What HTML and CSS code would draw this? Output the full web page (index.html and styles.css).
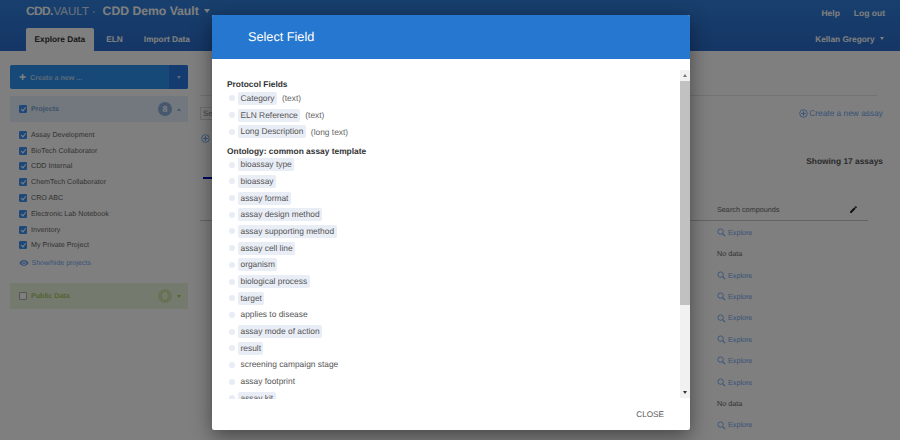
FILE: index.html
```html
<!DOCTYPE html>
<html lang="en">
<head>
  <meta charset="UTF-8">
  <title>CDD Vault - Select Field</title>
  <link rel="stylesheet" href="styles.css">
</head>
<body>
  <header class="topbar">
    <div class="topbar-row">
      <div class="brand">
        <span class="logo-cdd">CDD.</span><span class="logo-vault">VAULT</span><span class="logo-dot">·</span>
        <span class="vault-name">CDD Demo Vault</span>
        <span class="caret caret-big"></span>
      </div>
      <nav class="top-links">
        <a>Help</a>
        <a>Log out</a>
      </nav>
    </div>
    <div class="topbar-row tabs-row">
      <div class="tabs">
        <a class="tab active">Explore Data</a>
        <a class="tab">ELN</a>
        <a class="tab">Import Data</a>
      </div>
      <div class="user-menu">Kellan Gregory <span class="caret"></span></div>
    </div>
  </header>

  <div class="page">
    <aside class="sidebar">
      <div class="create-btn">
        <span class="create-label"><span class="plus">+</span>Create a new ...</span>
        <span class="create-drop"><span class="caret"></span></span>
      </div>

      <div class="panel-head">
        <span class="check on"></span>
        <span class="panel-title">Projects</span>
        <span class="count">8</span>
        <span class="caret caret-up"></span>
      </div>
      <ul class="projects">
        <li><span class="check on"></span>Assay Development</li>
        <li><span class="check on"></span>BioTech Collaborator</li>
        <li><span class="check on"></span>CDD Internal</li>
        <li><span class="check on"></span>ChemTech Collaborator</li>
        <li><span class="check on"></span>CRO ABC</li>
        <li><span class="check on"></span>Electronic Lab Notebook</li>
        <li><span class="check on"></span>Inventory</li>
        <li><span class="check on"></span>My Private Project</li>
      </ul>
      <a class="show-hide">
        <svg width="10" height="10" viewBox="0 0 24 24"><path fill="#70a8f0" d="M12 5C7 5 2.700 8.100 1 12c1.700 3.900 6 7 11 7s9.300-3.100 11-7c-1.700-3.900-6-7-11-7zm0 11.500a4.500 4.500 0 1 1 0-9 4.500 4.500 0 0 1 0 9zm0-7a2.500 2.500 0 1 0 0 5 2.500 2.500 0 0 0 0-5z"/></svg>
        Show/hide projects
      </a>

      <div class="panel-head public">
        <span class="check"></span>
        <span class="panel-title">Public Data</span>
        <span class="count">0</span>
        <span class="caret"></span>
      </div>
    </aside>

    <main class="main">
      <div class="main-rule"></div>
      <div class="toolbar">
        <div class="search-stub">Se</div>
        <a class="create-assay">
          <svg width="9" height="9" viewBox="0 0 20 20"><circle cx="10" cy="10" r="8.500" fill="none" stroke="#70a8f0" stroke-width="2"/><path d="M10 5v10M5 10h10" stroke="#70a8f0" stroke-width="2.500"/></svg>
          Create a new assay
        </a>
      </div>
      <div class="add-row">
        <svg width="9" height="9" viewBox="0 0 20 20"><circle cx="10" cy="10" r="8.500" fill="none" stroke="#70a8f0" stroke-width="2"/><path d="M10 5v10M5 10h10" stroke="#70a8f0" stroke-width="2.500"/></svg>
      </div>
      <div class="showing">Showing 17 assays</div>
      <div class="tab-mark"></div>
      <div class="assay-table">
        <div class="table-head">
          <span>Search compounds</span>
          <svg class="pencil" width="9" height="9" viewBox="0 0 24 24"><path fill="#222" d="M3 17.250V21h3.750L17.800 9.940l-3.750-3.750L3 17.250zM20.700 7.040a1 1 0 0 0 0-1.410l-2.340-2.340a1 1 0 0 0-1.410 0l-1.830 1.830 3.750 3.750 1.830-1.830z"/></svg>
        </div>
        <div class="table-row"><a class="explore"><svg width="9" height="9" viewBox="0 0 20 20"><circle cx="8" cy="8" r="6" fill="none" stroke="#70a8f0" stroke-width="2"/><path d="M12.500 12.500L18 18" stroke="#70a8f0" stroke-width="2.500"/></svg> Explore</a></div>
        <div class="table-row">No data</div>
        <div class="table-row"><a class="explore"><svg width="9" height="9" viewBox="0 0 20 20"><circle cx="8" cy="8" r="6" fill="none" stroke="#70a8f0" stroke-width="2"/><path d="M12.500 12.500L18 18" stroke="#70a8f0" stroke-width="2.500"/></svg> Explore</a></div>
        <div class="table-row"><a class="explore"><svg width="9" height="9" viewBox="0 0 20 20"><circle cx="8" cy="8" r="6" fill="none" stroke="#70a8f0" stroke-width="2"/><path d="M12.500 12.500L18 18" stroke="#70a8f0" stroke-width="2.500"/></svg> Explore</a></div>
        <div class="table-row"><a class="explore"><svg width="9" height="9" viewBox="0 0 20 20"><circle cx="8" cy="8" r="6" fill="none" stroke="#70a8f0" stroke-width="2"/><path d="M12.500 12.500L18 18" stroke="#70a8f0" stroke-width="2.500"/></svg> Explore</a></div>
        <div class="table-row"><a class="explore"><svg width="9" height="9" viewBox="0 0 20 20"><circle cx="8" cy="8" r="6" fill="none" stroke="#70a8f0" stroke-width="2"/><path d="M12.500 12.500L18 18" stroke="#70a8f0" stroke-width="2.500"/></svg> Explore</a></div>
        <div class="table-row"><a class="explore"><svg width="9" height="9" viewBox="0 0 20 20"><circle cx="8" cy="8" r="6" fill="none" stroke="#70a8f0" stroke-width="2"/><path d="M12.500 12.500L18 18" stroke="#70a8f0" stroke-width="2.500"/></svg> Explore</a></div>
        <div class="table-row"><a class="explore"><svg width="9" height="9" viewBox="0 0 20 20"><circle cx="8" cy="8" r="6" fill="none" stroke="#70a8f0" stroke-width="2"/><path d="M12.500 12.500L18 18" stroke="#70a8f0" stroke-width="2.500"/></svg> Explore</a></div>
        <div class="table-row">No data</div>
        <div class="table-row"><a class="explore"><svg width="9" height="9" viewBox="0 0 20 20"><circle cx="8" cy="8" r="6" fill="none" stroke="#70a8f0" stroke-width="2"/><path d="M12.500 12.500L18 18" stroke="#70a8f0" stroke-width="2.500"/></svg> Explore</a></div>
      </div>
    </main>
  </div>

  <div class="overlay"></div>

  <div class="modal">
    <div class="modal-head">Select Field</div>
    <div class="modal-body">
      <div class="field-list">
        <h4>Protocol Fields</h4>
        <div class="field"><span class="chip">Category</span><span class="kind">(text)</span></div>
        <div class="field"><span class="chip">ELN Reference</span><span class="kind">(text)</span></div>
        <div class="field"><span class="chip">Long Description</span><span class="kind">(long text)</span></div>
        <h4 class="second">Ontology: common assay template</h4>
        <div class="field"><span class="chip">bioassay type</span></div>
        <div class="field"><span class="chip">bioassay</span></div>
        <div class="field"><span class="chip">assay format</span></div>
        <div class="field"><span class="chip">assay design method</span></div>
        <div class="field"><span class="chip">assay supporting method</span></div>
        <div class="field"><span class="chip">assay cell line</span></div>
        <div class="field"><span class="chip">organism</span></div>
        <div class="field"><span class="chip">biological process</span></div>
        <div class="field"><span class="chip">target</span></div>
        <div class="field"><span class="chip plain">applies to disease</span></div>
        <div class="field"><span class="chip">assay mode of action</span></div>
        <div class="field"><span class="chip">result</span></div>
        <div class="field"><span class="chip plain">screening campaign stage</span></div>
        <div class="field"><span class="chip plain">assay footprint</span></div>
        <div class="field"><span class="chip">assay kit</span></div>
      </div>
      <div class="scrollbar">
        <span class="arrow arrow-up"></span>
        <div class="scroll-track"><div class="scroll-thumb"></div></div>
        <span class="arrow arrow-down"></span>
      </div>
    </div>
    <div class="modal-foot"><a class="close-btn">CLOSE</a></div>
  </div>
</body>
</html>
```

FILE: styles.css
```css
* {
  box-sizing: border-box;
  margin: 0;
  padding: 0;
}

html, body {
  height: 440px;
  overflow: hidden;
}

body {
  font-family: "Liberation Sans", Arial, sans-serif;
  font-size: 9px;
  color: #333;
  background: #fff;
  text-rendering: geometricPrecision;
}

.caret {
  display: inline-block;
  width: 0;
  height: 0;
  border-left: 2.500px solid transparent;
  border-right: 2.500px solid transparent;
  border-top: 3px solid currentColor;
}

.caret-big {
  border-left-width: 3.500px;
  border-right-width: 3.500px;
  border-top-width: 4px;
  margin-left: 3px;
  vertical-align: 2px;
}

.caret-up {
  border-top: 0;
  border-bottom: 3px solid currentColor;
}

/* top bar */
.topbar {
  height: 51px;
  background: linear-gradient(to bottom, #3080dc, #2a6ccc);
  color: #fff;
}

.topbar-row {
  display: flex;
  justify-content: space-between;
  align-items: center;
  height: 28px;
  padding: 0 15px 0 26px;
}

.brand {
  color: #fff;
  white-space: nowrap;
  margin-bottom: 6px;
}

.logo-cdd {
  font-size: 12px;
  font-weight: 700;
  letter-spacing: -0.700px;
}

.logo-vault {
  font-size: 11.500px;
  margin-left: 1px;
  opacity: 0.8;
}

.logo-dot {
  font-size: 11px;
  margin: 0 4.500px 0 3px;
}

.vault-name {
  font-size: 12.200px;
  font-weight: 700;
}

.top-links {
  display: flex;
  gap: 14px;
  font-size: 8.500px;
  font-weight: 700;
  margin-bottom: 2px;
}

.tabs-row {
  height: 23px;
  align-items: flex-end;
}

.tabs {
  display: flex;
  font-size: 8.300px;
  font-weight: 700;
}

.tab {
  height: 23px;
  line-height: 22px;
  padding: 0 8.500px;
  margin-right: 4px;
}

.tab.active {
  background: #fff;
  color: #333;
  border-radius: 2px 2px 0 0;
}

.user-menu {
  font-size: 8.300px;
  font-weight: 700;
  line-height: 23px;
  margin-right: 1px;
}

.user-menu .caret {
  margin-left: 3px;
  vertical-align: 2px;
}

/* page under the dialog */
.page {
  display: flex;
  gap: 12px;
  padding: 14px 17px 0 10px;
}

.sidebar {
  width: 178px;
  flex-shrink: 0;
}

.create-btn {
  display: flex;
  height: 24px;
  border-radius: 2px;
  background: #2d90f0;
  color: #b8d4f0;
  font-weight: 700;
  margin-bottom: 7px;
  overflow: hidden;
}

.create-label {
  flex: 1;
  display: flex;
  align-items: center;
  padding-left: 9px;
  font-size: 7.200px;
}

.plus {
  font-size: 12px;
  margin-right: 4px;
  color: #fff;
}

.create-drop {
  width: 19px;
  display: flex;
  align-items: center;
  justify-content: center;
  background: #2878e0;
}

.check {
  display: inline-block;
  width: 8px;
  height: 8px;
  flex-shrink: 0;
  border: 1px solid #aaa;
  border-radius: 1px;
  background: #fff;
}

.check.on {
  border-color: #3c90f5;
  background: #3c90f5;
  position: relative;
}

.check.on::after {
  content: "";
  position: absolute;
  left: 1.500px;
  top: 0;
  width: 2px;
  height: 4px;
  border: solid #fff;
  border-width: 0 1px 1px 0;
  transform: rotate(40deg);
}

.panel-head {
  display: flex;
  align-items: center;
  height: 26px;
  padding: 0 7px 0 9px;
  background: #e4f0fa;
  color: #7aa4d4;
  font-size: 7.100px;
  font-weight: 700;
}

.panel-title {
  flex: 1;
  margin-left: 4px;
}

.count {
  width: 14px;
  height: 14px;
  line-height: 14px;
  border-radius: 50%;
  text-align: center;
  font-size: 9px;
  background: #8fb0dc;
  color: #fff;
  margin-right: 5px;
}

.panel-head .caret {
  color: #8fb0dc;
}

.panel-head.public {
  background: #eaf5dc;
  color: #a5c765;
  margin-top: 15px;
}

.panel-head.public .count {
  background: #cfe6a8;
}

.panel-head.public .caret {
  color: #a5c765;
}

.projects {
  list-style: none;
  padding: 5px 0 0 9px;
  font-size: 7.150px;
  color: #666;
}

.projects li {
  height: 15.800px;
  display: flex;
  align-items: center;
  gap: 4px;
}

.show-hide {
  display: flex;
  align-items: center;
  gap: 3px;
  padding: 5px 0 0 8.500px;
  color: #70a8f0;
  font-size: 7px;
}

.main {
  flex: 1;
}

.main-rule {
  height: 31px;
  width: 677px;
  border-bottom: 1px solid #e6e6e6;
}

.toolbar {
  display: flex;
  justify-content: space-between;
  align-items: center;
  height: 34px;
}

.search-stub {
  border: 1px solid #ddd;
  width: 30px;
  height: 13px;
  padding-left: 2px;
  color: #888;
  font-size: 8px;
  line-height: 11px;
}

.create-assay {
  color: #70a8f0;
  font-size: 8.350px;
  display: flex;
  align-items: center;
  gap: 1px;
}

.add-row {
  height: 17px;
  margin-top: 4px;
  padding-left: 1px;
}

.showing {
  text-align: right;
  font-size: 8.400px;
  font-weight: 700;
  color: #555;
  line-height: 12px;
  margin-top: 4px;
}

.tab-mark {
  width: 9px;
  height: 1.500px;
  background: #0000c8;
  margin: 10px 0 0 3px;
}

.assay-table {
  width: 668px;
  margin-top: 21px;
}

.table-head {
  display: flex;
  align-items: center;
  justify-content: space-between;
  height: 21px;
  padding: 0 10px 1px 517px;
  border-bottom: 1px solid #c8c8c8;
  font-size: 7.250px;
  color: #666;
  margin-bottom: 1.400px;
}

.table-row {
  height: 21.400px;
  line-height: 21.400px;
  padding-left: 517px;
  font-size: 7.200px;
  color: #666;
}

.explore {
  color: #70a8f0;
  display: inline-flex;
  align-items: center;
  gap: 2px;
  height: 100%;
}

/* dialog */
.overlay {
  position: absolute;
  inset: 0;
  background: rgba(0, 0, 0, 0.5);
}

.modal {
  position: absolute;
  left: 212px;
  top: 15px;
  width: 478px;
  height: 415px;
  background: #fff;
  border-radius: 2px;
  display: flex;
  flex-direction: column;
  box-shadow: 0 6px 20px rgba(0, 0, 0, 0.45);
}

.modal-head {
  height: 44px;
  line-height: 44px;
  padding-left: 36px;
  background: #2677d0;
  color: #fff;
  font-size: 12.700px;
  border-radius: 2px 2px 0 0;
}

.modal-body {
  flex: 1;
  min-height: 0;
  display: flex;
  padding-top: 11px;
}

.field-list {
  flex: 1;
  height: 329px;
  overflow: hidden;
  padding: 9px 0 0 15px;
  font-size: 8.400px;
  color: #555;
}

.field-list h4 {
  font-size: 8.400px;
  font-weight: 700;
  color: #333;
  line-height: 11px;
}

.field-list h4.second {
  margin-top: 6px;
  margin-bottom: -0.700px;
}

.field {
  display: flex;
  align-items: center;
  height: 16.700px;
  white-space: nowrap;
}

.field::before {
  content: "";
  width: 6px;
  height: 6px;
  border-radius: 50%;
  background: #e8ecf5;
  margin: 0 3px 0 2px;
}

.chip {
  background: #e9edf5;
  border-radius: 2px;
  padding: 0 2.500px;
  line-height: 13px;
  height: 13px;
  color: #555;
}

.chip.plain {
  background: none;
}

.kind {
  margin-left: 5px;
  color: #666;
}

.scrollbar {
  width: 10px;
  height: 328px;
  background: #f1f1f1;
  display: flex;
  flex-direction: column;
  align-items: center;
}

.arrow {
  flex-shrink: 0;
  width: 0;
  height: 0;
  border-left: 2.500px solid transparent;
  border-right: 2.500px solid transparent;
  margin: 4px 0;
}

.arrow-up {
  border-bottom: 3px solid #777;
}

.arrow-down {
  border-top: 3px solid #333;
}

.scroll-track {
  flex: 1;
  width: 100%;
}

.scroll-thumb {
  width: 100%;
  height: 224px;
  background: #c1c1c1;
}

.modal-foot {
  height: 31px;
  display: flex;
  align-items: center;
  justify-content: flex-end;
  padding-right: 26px;
}

.close-btn {
  font-size: 8.200px;
  color: #555;
}
```
